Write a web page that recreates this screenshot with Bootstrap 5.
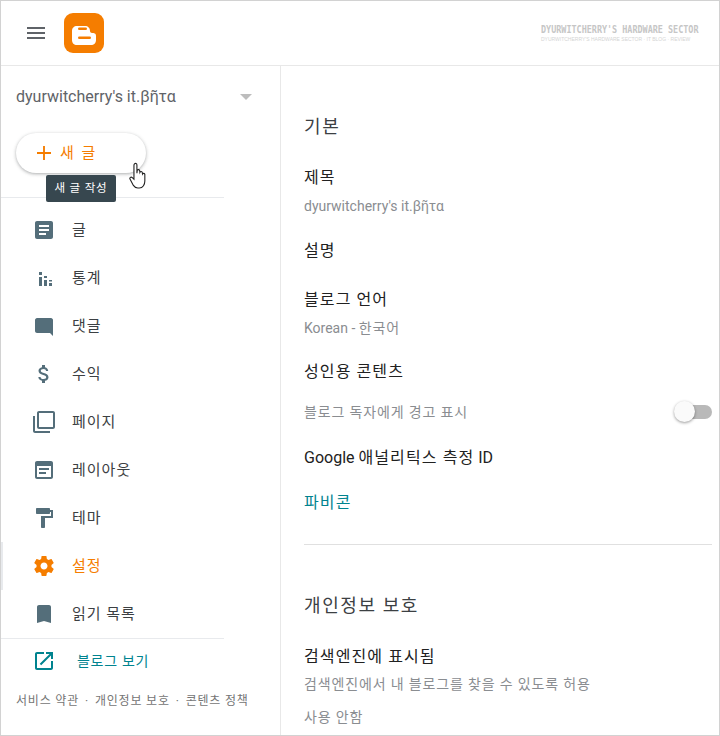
<!DOCTYPE html>
<html lang="ko">
<head>
    <title>Blogger 설정</title>
    <meta name="viewport" content="width=device-width, initial-scale=1">
    <link href="https://cdn.jsdelivr.net/npm/bootstrap@5.3.0/dist/css/bootstrap.min.css" rel="stylesheet">
    <script src="https://cdn.jsdelivr.net/npm/bootstrap@5.3.0/dist/js/bootstrap.bundle.min.js"></script>
    <style>
        html, body {
            height: 100%;
            overflow: hidden;
        }
        body {
            font-family: Roboto, "Noto Sans CJK KR", sans-serif;
            color: #212121;
            background: #fff;
        }
        .app-frame {
            width: 720px;
            height: 736px;
            border: 1px solid #d2d2d2;
            overflow: hidden;
        }
        .top-bar {
            height: 65px;
            border-bottom: 1px solid #e8e8e8;
            padding-left: 26px;
            padding-right: 20px;
            flex: none;
        }
        .burger {
            width: 18px;
            height: 12px;
            border-top: 2px solid #5f6368;
            border-bottom: 2px solid #5f6368;
            margin-right: 19px;
            position: relative;
        }
        .burger::after {
            content: "";
            position: absolute;
            left: 0;
            right: 0;
            top: 3px;
            height: 2px;
            background: #5f6368;
        }
        .brand-text {
            width: 158px;
            color: #c6c6c6;
            line-height: 1;
        }
        .brand-main {
            font-family: "DejaVu Sans Mono", monospace;
            font-size: 8.45px;
            font-weight: 700;
            white-space: nowrap;
            transform: scaleY(1.25);
            padding-top: 1px;
        }
        .brand-sub {
            font-family: "Liberation Sans", sans-serif;
            font-size: 5px;
            margin-top: 4px;
            white-space: nowrap;
            color: #d4d4d4;
        }
        .side-col {
            width: 280px;
            border-right: 1px solid #e8e8e8;
            flex: none;
            position: relative;
        }
        .blog-pick {
            height: 62px;
            padding: 0 28px 0 15px;
            font-size: 16px;
            color: #5f6368;
        }
        .pick-arrow {
            width: 0;
            height: 0;
            border-left: 6px solid transparent;
            border-right: 6px solid transparent;
            border-top: 6px solid #bdbdbd;
        }
        .new-post {
            width: 130px;
            height: 40px;
            margin-left: 15px;
            margin-top: 5px;
            border-radius: 20px;
            background: #fff;
            box-shadow: 0 1px 3px rgba(60, 64, 67, .3), 0 1px 4px rgba(60, 64, 67, .15);
            color: #f57d00;
            font-size: 15px;
            letter-spacing: 2px;
            padding-left: 21px;
            gap: 9px;
        }
        .tip-box {
            position: absolute;
            left: 45px;
            top: 109px;
            height: 27px;
            width: 70px;
            background: #37474f;
            border-radius: 2px;
            color: #fff;
            font-size: 11.5px;
            letter-spacing: .8px;
            z-index: 2;
        }
        .hand-cursor {
            position: absolute;
            left: 128px;
            top: 96px;
            z-index: 3;
        }
        .menu-box {
            width: 223px;
            margin-top: 24px;
            border-top: 1px solid #e8eaed;
            border-bottom: 1px solid #e8eaed;
            padding: 8px 0 0;
            height: 442px;
        }
        .menu-row {
            height: 48px;
            color: #3c4043;
            font-size: 15px;
            text-decoration: none;
            position: relative;
            padding-left: 31px;
            letter-spacing: 1px;
        }
        .menu-ico {
            width: 24px;
            height: 24px;
            margin-right: 16px;
            fill: #546e7a;
            flex: none;
        }
        .menu-row.is-on {
            color: #f57d00;
        }
        .menu-row.is-on .menu-ico {
            fill: #f57d00;
        }
        .menu-row.is-on::before {
            content: "";
            position: absolute;
            left: 0;
            top: 0;
            bottom: 0;
            width: 2px;
            background: #e8eaed;
        }
        .view-link {
            height: 44px;
            padding-left: 31px;
            color: #00838f;
            font-size: 14px;
            letter-spacing: .7px;
            text-decoration: none;
        }
        .view-link .menu-ico {
            fill: #00838f;
            margin-right: 21px;
        }
        .side-foot {
            padding-left: 15px;
            font-size: 12px;
            letter-spacing: .8px;
            color: #757575;
            white-space: nowrap;
            margin-top: 9px;
        }
        .side-foot span {
            margin: 0 6px;
        }
        .main-col {
            padding: 49px 7px 0 23px;
            min-width: 0;
        }
        .sec-title {
            font-size: 18px;
            font-weight: 400;
            color: #3c4043;
            line-height: 24px;
            letter-spacing: 1.6px;
            margin: 0;
        }
        .opt-label {
            font-size: 16px;
            line-height: 24px;
            color: #212121;
            margin: 0;
        }
        .opt-sub {
            font-size: 14px;
            line-height: 20px;
            color: #8a8d91;
            margin: 0;
        }
        .ko-wide {
            letter-spacing: 1.1px;
        }
        .ko-sub {
            letter-spacing: .85px;
        }
        .opt-link {
            color: #00838f;
        }
        .toggle-track {
            width: 28px;
            height: 14px;
            border-radius: 7px;
            background: #b9b9b9;
            position: relative;
            flex: none;
        }
        .toggle-knob {
            position: absolute;
            left: -10px;
            top: -4px;
            width: 21px;
            height: 21px;
            border-radius: 50%;
            background: #fafafa;
            box-shadow: 0 1px 3px rgba(0, 0, 0, .4);
        }
        .sec-rule {
            margin: 29px 0 0;
            border: 0;
            border-top: 1px solid #e0e0e0;
            opacity: 1;
        }
        /* vertical rhythm of the settings list, taken from the screenshot */
        .sp-5 { margin-top: 5px; }
        .sp-6 { margin-top: 6px; }
        .sp-13 { margin-top: 13px; }
        .sp-18 { margin-top: 18px; }
        .sp-21 { margin-top: 21px; }
        .sp-22 { margin-top: 22px; }
        .sp-23 { margin-top: 23px; }
        .sp-24 { margin-top: 24px; }
        .sp-25 { margin-top: 25px; }
        .sp-27 { margin-top: 27px; }
        .sp-49 { margin-top: 49px; }
    </style>
</head>
<body>
    <div class="app-frame d-flex flex-column">
        <header class="top-bar d-flex align-items-center">
            <div class="burger"></div>
            <svg width="40" height="40" viewBox="0 0 40 40">
                <rect width="40" height="40" rx="9" fill="#f57d00"/>
                <path d="M13 13h8c3 0 5 2 5 5 0 1 1 2 2 2 2 0 4 0 4 3v4c0 3-2 5-5 5H13c-3 0-5-2-5-5V18c0-3 2-5 5-5z" fill="#fff"/>
                <rect x="14" y="14.500" width="9" height="2.500" rx="1.250" fill="#f57d00"/>
                <rect x="14" y="23.500" width="13" height="2.500" rx="1.250" fill="#f57d00"/>
            </svg>
            <div class="brand-text ms-auto">
                <div class="brand-main">DYURWITCHERRY'S HARDWARE SECTOR</div>
                <div class="brand-sub">DYURWITCHERRY'S HARDWARE SECTOR · IT BLOG · REVIEW</div>
            </div>
        </header>
        <div class="d-flex flex-grow-1">
            <aside class="side-col">
                <div class="blog-pick d-flex align-items-center justify-content-between">
                    <span>dyurwitcherry's it.βῆτα</span>
                    <span class="pick-arrow"></span>
                </div>
                <div class="new-post d-flex align-items-center">
                    <svg width="14" height="14" viewBox="0 0 15 15"><path d="M6.500 0h2v6.500H15v2H8.500V15h-2V8.500H0v-2h6.500z" fill="#f57d00"/></svg>
                    <span>새 글</span>
                </div>
                <div class="tip-box d-flex align-items-center justify-content-center">새 글 작성</div>
                <svg class="hand-cursor" width="22" height="29" viewBox="0 0 20 26">
                    <path d="M5 1.500c.9-.9 2.200-.3 2.200 1V10l.3-2.600c.6-1 2-.8 2.200.3l.2 1.500c.4-1 2-1 2.200.2l.2 1.300c.5-.9 2-.7 2.100.4v6c0 3-1.600 6.400-5 6.400H8c-2 0-3.100-1-4-2.400L1 15.500c-.8-1.400.8-2.600 2-1.500l1.500 1.500V3c0-.6.100-1.100.5-1.500z" fill="#fff" stroke="#222" stroke-width="1"/>
                </svg>
                <nav class="menu-box">
                    <a class="menu-row d-flex align-items-center" href="#">
                        <svg class="menu-ico" viewBox="0 0 24 24"><path d="M19 3H5c-1.100 0-2 .9-2 2v14c0 1.100.9 2 2 2h14c1.100 0 2-.9 2-2V5c0-1.100-.9-2-2-2zm-5 14H7v-2h7v2zm3-4H7v-2h10v2zm0-4H7V7h10v2z"/></svg>
                        <span>글</span>
                    </a>
                    <a class="menu-row d-flex align-items-center" href="#">
                        <svg class="menu-ico" viewBox="0 0 24 24"><path d="M7 6h3v3H7zM7 11h3v9H7zM12 10h3v2h-3zM12 14h3v6h-3zM17 14h3v1.500h-3zM17 17h3v3h-3z"/></svg>
                        <span>통계</span>
                    </a>
                    <a class="menu-row d-flex align-items-center" href="#">
                        <svg class="menu-ico" viewBox="0 0 24 24"><path d="M5 4h14c1 0 2 1 2 2v16l-3-3H5c-1 0-2-1-2-2V6c0-1 1-2 2-2z"/></svg>
                        <span>댓글</span>
                    </a>
                    <a class="menu-row d-flex align-items-center" href="#">
                        <svg class="menu-ico" viewBox="0 0 24 24"><path d="M11.800 10.900c-2.270-.59-3-1.200-3-2.150 0-1.090 1.010-1.850 2.700-1.850 1.780 0 2.440.85 2.500 2.100h2.210c-.07-1.720-1.120-3.300-3.210-3.810V3h-3v2.160c-1.940.42-3.500 1.680-3.500 3.610 0 2.310 1.910 3.460 4.700 4.130 2.500.6 3 1.480 3 2.410 0 .69-.49 1.790-2.700 1.790-2.060 0-2.870-.92-2.980-2.100h-2.200c.12 2.190 1.760 3.420 3.680 3.830V21h3v-2.150c1.950-.37 3.500-1.500 3.500-3.550 0-2.840-2.430-3.810-4.700-4.400z"/></svg>
                        <span>수익</span>
                    </a>
                    <a class="menu-row d-flex align-items-center" href="#">
                        <svg class="menu-ico" viewBox="0 0 24 24"><path d="M3 6H1v15c0 1.100.9 2 2 2h15v-2H3V6zm18-5H7c-1.100 0-2 .9-2 2v14c0 1.100.9 2 2 2h14c1.100 0 2-.9 2-2V3c0-1.100-.9-2-2-2zm0 16H7V3h14v14z"/></svg>
                        <span>페이지</span>
                    </a>
                    <a class="menu-row d-flex align-items-center" href="#">
                        <svg class="menu-ico" viewBox="0 0 24 24"><path d="M19 3H5c-1.100 0-2 .9-2 2v14c0 1.100.9 2 2 2h14c1.100 0 2-.9 2-2V5c0-1.100-.9-2-2-2zm0 16H5V8h14v11zM7 10h10v2H7zm0 4h7v2H7z"/></svg>
                        <span>레이아웃</span>
                    </a>
                    <a class="menu-row d-flex align-items-center" href="#">
                        <svg class="menu-ico" viewBox="0 0 24 24"><path d="M18 4V3c0-.55-.45-1-1-1H5c-.55 0-1 .45-1 1v4c0 .55.45 1 1 1h12c.55 0 1-.45 1-1V6h1v4H9v11c0 .55.45 1 1 1h2c.55 0 1-.45 1-1v-9h8V4h-3z"/></svg>
                        <span>테마</span>
                    </a>
                    <a class="menu-row is-on d-flex align-items-center" href="#">
                        <svg class="menu-ico" viewBox="0 0 24 24"><path d="M19.430 12.980c.04-.32.07-.64.07-.98s-.03-.66-.07-.98l2.110-1.650c.19-.15.24-.42.12-.64l-2-3.460c-.12-.22-.39-.3-.61-.22l-2.490 1c-.52-.4-1.080-.73-1.690-.98l-.38-2.650C14.460 2.180 14.250 2 14 2h-4c-.25 0-.46.18-.49.420l-.38 2.650c-.61.25-1.170.59-1.690.98l-2.490-1c-.23-.09-.49 0-.61.22l-2 3.460c-.13.22-.07.49.12.64l2.110 1.650c-.04.32-.07.65-.07.98s.03.66.07.98l-2.110 1.650c-.19.15-.24.42-.12.64l2 3.460c.12.22.39.3.61.22l2.490-1c.52.4 1.080.73 1.690.98l.38 2.650c.03.24.24.42.49.42h4c.25 0 .46-.18.49-.42l.38-2.650c.61-.25 1.170-.59 1.690-.98l2.490 1c.23.09.49 0 .61-.22l2-3.460c.12-.22.07-.49-.12-.64l-2.110-1.650zM12 15.500c-1.930 0-3.500-1.570-3.500-3.500s1.570-3.500 3.500-3.500 3.500 1.570 3.500 3.500-1.570 3.500-3.500 3.500z"/></svg>
                        <span>설정</span>
                    </a>
                    <a class="menu-row d-flex align-items-center" href="#">
                        <svg class="menu-ico" viewBox="0 0 24 24"><path d="M17 3H7c-1.100 0-2 .9-2 2v16l7-2 7 2V5c0-1.100-.9-2-2-2z"/></svg>
                        <span>읽기 목록</span>
                    </a>
                </nav>
                <a class="view-link d-flex align-items-center" href="#">
                    <svg class="menu-ico" viewBox="0 0 24 24"><path d="M19 19H5V5h7V3H5c-1.110 0-2 .9-2 2v14c0 1.100.89 2 2 2h14c1.100 0 2-.9 2-2v-7h-2v7zM14 3v2h3.590l-9.830 9.830 1.410 1.410L19 6.410V10h2V3h-7z"/></svg>
                    <span>블로그 보기</span>
                </a>
                <div class="side-foot">서비스 약관<span>·</span>개인정보 보호<span>·</span>콘텐츠 정책</div>
            </aside>
            <main class="main-col flex-grow-1">
                <h2 class="sec-title">기본</h2>
                <p class="opt-label ko-wide sp-27">제목</p>
                <p class="opt-sub sp-6">dyurwitcherry's it.βῆτα</p>
                <p class="opt-label ko-wide sp-23">설명</p>
                <p class="opt-label ko-wide sp-25">블로그 언어</p>
                <p class="opt-sub sp-6">Korean - <span class="ko-sub">한국어</span></p>
                <p class="opt-label ko-wide sp-22">성인용 콘텐츠</p>
                <div class="d-flex align-items-center justify-content-between sp-18">
                    <p class="opt-sub ko-sub">블로그 독자에게 경고 표시</p>
                    <div class="toggle-track"><div class="toggle-knob"></div></div>
                </div>
                <p class="opt-label sp-24">Google <span class="ko-wide">애널리틱스 측정</span> ID</p>
                <p class="opt-label opt-link ko-wide sp-21">파비콘</p>
                <hr class="sec-rule">
                <h2 class="sec-title sp-49">개인정보 보호</h2>
                <p class="opt-label ko-wide sp-27">검색엔진에 표시됨</p>
                <p class="opt-sub ko-sub sp-5">검색엔진에서 내 블로그를 찾을 수 있도록 허용</p>
                <p class="opt-sub ko-sub sp-13">사용 안함</p>
            </main>
        </div>
    </div>
</body>
</html>
